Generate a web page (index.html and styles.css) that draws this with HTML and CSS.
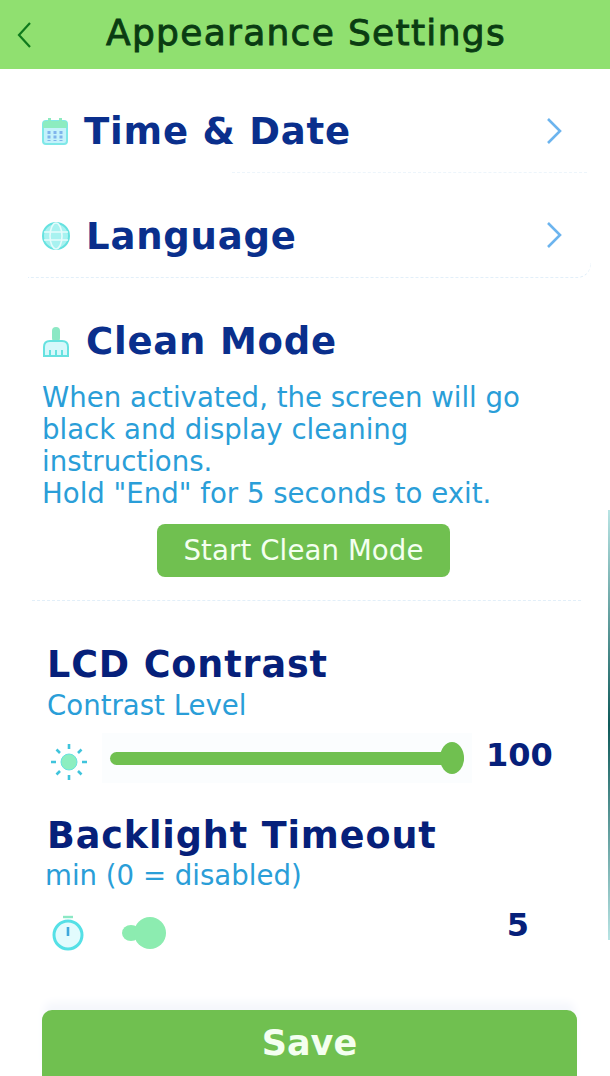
FILE: index.html
```html
<!DOCTYPE html>
<html lang="en">
<head>
    <meta charset="UTF-8">
    <meta name="viewport" content="width=device-width, initial-scale=1.0">
    <title>Appearance Settings</title>
    <link rel="stylesheet" href="styles.css">
</head>
<body>
    <header class="topbar">
        <svg class="back-icon" viewBox="0 0 16 28" width="16" height="28"><path d="M14 2 L3 14 L14 26" fill="none" stroke="#0f7a1c" stroke-width="2.2"/></svg>
        <h1 class="topbar-title">Appearance Settings</h1>
    </header>

    <main class="content">
        <section class="nav-card">
            <div class="nav-row nav-row-time">
                <svg class="row-icon" viewBox="0 0 26 28" width="26" height="28">
                    <rect x="1" y="4" width="24" height="23" rx="3" fill="#c4f2fb" stroke="#7fe8e8" stroke-width="2"/>
                    <path d="M1 11 V6 Q1 4 3 4 H23 Q25 4 25 6 V11 Z" fill="#8cecc0"/>
                    <rect x="6" y="1" width="3" height="5" fill="#8cecc0"/>
                    <rect x="17" y="1" width="3" height="5" fill="#8cecc0"/>
                    <path d="M7 14 V24 M13 14 V24 M19 14 V24" stroke="#7fb4ec" stroke-width="3" stroke-dasharray="3 1.5"/>
                </svg>
                <span class="row-title">Time &amp; Date</span>
                <svg class="chevron" viewBox="0 0 16 28" width="16" height="28"><path d="M2 2 L14 14 L2 26" fill="none" stroke="#6cb4ee" stroke-width="2.6"/></svg>
            </div>
            <div class="nav-row nav-row-language">
                <svg class="row-icon" viewBox="0 0 28 28" width="28" height="28">
                    <circle cx="14" cy="14" r="13" fill="#a8f2f0" stroke="#66e2e0" stroke-width="2"/>
                    <ellipse cx="14" cy="14" rx="6" ry="13" fill="none" stroke="#e6fbfb" stroke-width="1.6"/>
                    <path d="M2 10 H26 M2 18 H26" stroke="#e6fbfb" stroke-width="1.6"/>
                </svg>
                <span class="row-title">Language</span>
                <svg class="chevron" viewBox="0 0 16 28" width="16" height="28"><path d="M2 2 L14 14 L2 26" fill="none" stroke="#6cb4ee" stroke-width="2.6"/></svg>
            </div>
        </section>

        <section class="clean-card">
            <div class="clean-heading">
                <svg class="row-icon" viewBox="0 0 28 32" width="28" height="32">
                    <rect x="10" y="1" width="8" height="15" rx="4" fill="#8ce8c4"/>
                    <path d="M2 30 V21 Q2 15 8 15 H20 Q26 15 26 21 V30 Z" fill="#d6f8fb" stroke="#66e2e0" stroke-width="2"/>
                    <path d="M8 24 V30 M14 24 V30 M20 24 V30" stroke="#66e2e0" stroke-width="2"/>
                </svg>
                <span class="row-title">Clean Mode</span>
            </div>
            <p class="clean-text">When activated, the screen will go black and display cleaning instructions.<br>Hold "End" for 5 seconds to exit.</p>
            <button class="clean-btn">Start Clean Mode</button>
        </section>

        <section class="setting">
            <h2 class="setting-title">LCD Contrast</h2>
            <p class="setting-sub">Contrast Level</p>
            <div class="slider-row">
                <svg class="slider-icon sun-icon" viewBox="0 0 38 38" width="38" height="38">
                    <circle cx="19" cy="19" r="8" fill="#8ceec0" stroke="#66e2e0" stroke-width="1"/>
                    <path d="M19 1 V6 M19 32 V37 M1 19 H6 M32 19 H37 M6.5 6.5 L10 10 M28 28 L31.5 31.5 M6.5 31.5 L10 28 M28 10 L31.5 6.5" stroke="#3fc4dc" stroke-width="2.6"/>
                </svg>
                <div class="slider">
                    <div class="slider-fill"></div>
                    <div class="slider-thumb"></div>
                </div>
                <span class="slider-value">100</span>
            </div>
        </section>

        <section class="setting setting-timeout">
            <h2 class="setting-title">Backlight Timeout</h2>
            <p class="setting-sub">min (0 = disabled)</p>
            <div class="slider-row slider-row-timeout">
                <svg class="slider-icon" viewBox="0 0 32 36" width="32" height="36">
                    <path d="M11 2 H21" stroke="#8ce8c4" stroke-width="2.4"/>
                    <circle cx="16" cy="20" r="14" fill="#e2fbfd" stroke="#55e0e6" stroke-width="3"/>
                    <path d="M16 12 V21" stroke="#3fa8dc" stroke-width="2.6"/>
                </svg>
                <div class="knob">
                    <div class="knob-stub"></div>
                    <div class="knob-ball"></div>
                </div>
                <span class="timeout-value">5</span>
            </div>
        </section>

        <button class="save-btn">Save</button>
    </main>

    <div class="scroll-edge"></div>
</body>
</html>
```

FILE: styles.css
```css
* {
    box-sizing: border-box;
}

html, body {
    height: 100%;
}

body {
    margin: 0;
    font-family: "DejaVu Sans", sans-serif;
    background-color: #fff;
    overflow: hidden;
}

.topbar {
    height: 69px;
    background-color: #90e070;
    display: flex;
    align-items: center;
    padding-left: 16px;
}

.back-icon {
    flex: none;
}

.topbar-title {
    margin: 0 0 4px 74px;
    font-size: 36px;
    font-weight: 400;
    -webkit-text-stroke: 0.9px #0a3c12;
    color: #0a3c12;
    letter-spacing: 1.3px;
    white-space: nowrap;
}

.content {
    padding: 0 33px 0 42px;
}

.nav-card {
    padding-top: 37px;
}

.nav-row {
    position: relative;
    height: 105px;
    display: flex;
    align-items: flex-start;
}

/* faint card edges */
.nav-row-time::after {
    content: "";
    position: absolute;
    left: 190px;
    right: -10px;
    top: 66px;
    border-top: 1px dashed #edf5fb;
}

.nav-row-language::after {
    content: "";
    position: absolute;
    left: -14px;
    right: -14px;
    top: 52px;
    height: 14px;
    border-right: 1px dashed #edf5fb;
    border-bottom: 1px dashed #e2eff9;
    border-radius: 0 0 14px 0;
}

.row-icon {
    flex: none;
    margin-right: 16px;
}

.row-title {
    font-size: 37px;
    font-weight: 700;
    line-height: 52px;
    color: #0a2f8c;
    letter-spacing: 0.8px;
    white-space: nowrap;
}

.nav-row .row-icon {
    margin-top: 11px;
}

.chevron {
    flex: none;
    margin: 11px 15px 0 auto;
}

.nav-row-language .chevron {
    margin-top: 10px;
}

.clean-card {
    position: relative;
    display: flex;
    flex-direction: column;
    height: 325px;
}

.clean-card::after {
    content: "";
    position: absolute;
    left: -10px;
    right: -4px;
    top: 284px;
    border-top: 1px dashed #e2eff9;
}

.clean-heading {
    display: flex;
    align-items: center;
}

.clean-text {
    margin: 13.5px 0 0;
    font-size: 27.6px;
    line-height: 32.3px;
    color: #2a9ed8;
    width: 500px;
}

.clean-btn {
    align-self: flex-start;
    margin: 13px 0 0 115px;
    width: 293px;
    height: 53px;
    border: none;
    border-radius: 8px;
    background-color: #70c050;
    color: #f4fff0;
    font-family: inherit;
    font-size: 27.6px;
    letter-spacing: 0.1px;
}

.setting {
    padding-left: 5px;
}

.setting-title {
    margin: 0;
    font-size: 36.5px;
    font-weight: 700;
    line-height: 47px;
    color: #06207a;
    letter-spacing: 0.9px;
    white-space: nowrap;
}

.setting-sub {
    margin: 0;
    font-size: 27.6px;
    line-height: 36px;
    color: #2a9ed8;
}

.slider-row {
    display: flex;
    align-items: center;
    height: 68px;
}

.slider-icon {
    flex: none;
    margin-left: 3px;
}

.sun-icon {
    margin-top: 8px;
}

.slider {
    position: relative;
    width: 354px;
    height: 34px;
    margin-left: 22px;
    display: flex;
    align-items: center;
}

.slider::before {
    content: "";
    position: absolute;
    left: -8px;
    right: -8px;
    top: -8px;
    bottom: -8px;
    background-color: #fbfdfe;
}

.slider-fill {
    position: relative;
    width: 100%;
    height: 13px;
    border-radius: 7px;
    background-color: #70c050;
}

.slider-thumb {
    position: absolute;
    right: 0;
    top: 1px;
    width: 24px;
    height: 32px;
    border-radius: 50%;
    background-color: #70c050;
}

.slider-value {
    margin: 0 0 6px 22px;
    font-size: 32px;
    font-weight: 700;
    color: #06207a;
}

.setting-timeout {
    margin-top: 20px;
}

.setting-timeout .setting-sub {
    margin: -1px 0 0 -2px;
}

.slider-row-timeout {
    height: 78px;
}

.slider-row-timeout .slider-icon {
    margin-left: 5px;
}

.knob {
    display: flex;
    align-items: center;
    margin-left: 38px;
}

.knob-stub {
    width: 18px;
    height: 16px;
    border-radius: 50%;
    background-color: #8cecb0;
    margin-right: -6px;
}

.knob-ball {
    width: 32px;
    height: 32px;
    border-radius: 50%;
    background-color: #8cecb0;
}

.timeout-value {
    margin: 0 48px 16px auto;
    font-size: 32px;
    font-weight: 700;
    color: #06207a;
}

.save-btn {
    display: block;
    width: 535px;
    height: 66px;
    margin-top: 38px;
    border: none;
    border-radius: 10px 10px 0 0;
    background-color: #70c050;
    color: #f4fff0;
    font-family: inherit;
    font-size: 35px;
    font-weight: 700;
    box-shadow: 0 -10px 8px -2px #f5f7fc;
}

.scroll-edge {
    position: absolute;
    right: 0;
    top: 510px;
    width: 2px;
    height: 430px;
    background: linear-gradient(#b8e4e4, #0f5a5a 50%, #b8e4e4);
}
```
